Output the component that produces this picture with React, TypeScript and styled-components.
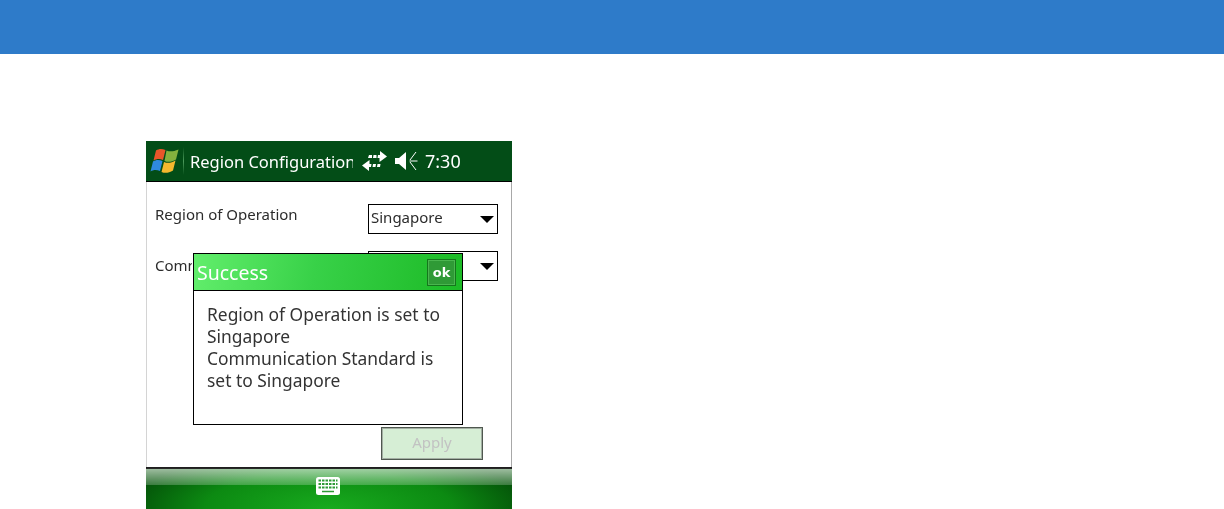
import styled, { createGlobalStyle } from "styled-components";

const GlobalStyle = createGlobalStyle`
  html, body {
    margin: 0;
    padding: 0;
    background: #ffffff;
    font-family: "Noto Sans", "Liberation Sans", sans-serif;
  }
`;

const Page = styled.div`
  height: 509px;
  overflow: hidden;
  width: 1224px;
`;

const Banner = styled.header`
  background: #2e7bc9;
  height: 54px;
`;

const Device = styled.div`
  display: flex;
  filter: blur(0.3px);
  flex-direction: column;
  height: 368px;
  margin-left: 146px;
  margin-top: 87px;
  position: relative;
  width: 366px;
`;

const TitleBar = styled.div`
  align-items: center;
  background: #034d17;
  border-bottom: 1px solid #000000;
  box-sizing: border-box;
  color: #ffffff;
  display: flex;
  flex: 0 0 41px;
  font-size: 16.5px;
  padding-left: 4px;
`;

const Divider = styled.span`
  background: linear-gradient(#034d17, #4c9a5c 50%, #034d17);
  height: 28px;
  margin: 0 6px 0 3px;
  width: 1px;
`;

const TitleText = styled.span`
  overflow: hidden;
  white-space: nowrap;
  width: 163px;
`;

const StatusIcons = styled.div`
  align-items: center;
  display: flex;
  gap: 7px;
  margin-left: 9px;
`;

const Clock = styled.span`
  font-size: 18px;
  margin-left: -1px;
`;

const Body = styled.main`
  background: #ffffff;
  border-left: 1px solid #d4d4d4;
  border-right: 1px solid #a8a8a8;
  box-sizing: border-box;
  display: flex;
  flex: 1;
  flex-direction: column;
  padding: 22px 13px 0 8px;
`;

const FormRow = styled.div`
  align-items: center;
  color: #2c2c2c;
  display: flex;
  font-size: 15px;
  height: 30px;
  justify-content: space-between;
  margin-bottom: 17px;
`;

const RowLabel = styled.span`
  margin-bottom: 10px;
`;

const ClippedLabel = styled(RowLabel)`
  margin-bottom: 3px;
  overflow: hidden;
  white-space: nowrap;
  width: 37px;
`;

const Select = styled.div`
  align-items: center;
  border: 1px solid #000000;
  box-sizing: border-box;
  color: #2c2c2c;
  display: flex;
  font-size: 15px;
  height: 30px;
  justify-content: space-between;
  padding: 0 3px 4px 2px;
  width: 130px;
`;

const Caret = styled.span`
  border-left: 7px solid transparent;
  border-right: 7px solid transparent;
  border-top: 7px solid #000000;
  height: 0;
  margin-left: auto;
  margin-top: 4px;
  width: 0;
`;

const Actions = styled.div`
  display: flex;
  justify-content: flex-end;
  margin-bottom: 7px;
  margin-right: 15px;
  margin-top: auto;
`;

const ApplyButton = styled.button`
  background: #d6eed5;
  border: 1px solid #4f584f;
  box-shadow: 0 0 0 1px #a3aea3 inset;
  box-sizing: border-box;
  color: #c2c2c2;
  font-family: inherit;
  font-size: 15px;
  height: 33px;
  padding: 0 0 3px;
  width: 102px;
`;

const TaskBar = styled.footer`
  background:
    linear-gradient(#1a1a1a 0, #2c2c2c 2px, rgba(255, 255, 255, 0) 2px),
    linear-gradient(rgba(255, 255, 255, 0.66), rgba(255, 255, 255, 0.22) 18px, rgba(255, 255, 255, 0) 18px),
    radial-gradient(ellipse 200px 62px at 50% 100%, #18ab1e, #0c8a12 62%, #045409);
  box-sizing: border-box;
  display: flex;
  flex: 0 0 42px;
  justify-content: center;
  padding: 10px 3px 0 0;
`;

const Dialog = styled.section`
  background: #ffffff;
  border: 1px solid #000000;
  box-sizing: border-box;
  display: flex;
  flex-direction: column;
  height: 172px;
  left: 47px;
  position: absolute;
  top: 112px;
  width: 270px;
`;

const DialogHeader = styled.div`
  align-items: center;
  background: linear-gradient(100deg, #62ee6c, #38d148 45%, #1cba26);
  border-bottom: 1px solid #000000;
  box-sizing: border-box;
  display: flex;
  flex: 0 0 37px;
  justify-content: space-between;
  padding: 0 6px 0 3px;
`;

const DialogTitle = styled.span`
  color: #ffffff;
  font-size: 19.5px;
`;

const OkButton = styled.button`
  background: #2f9a36;
  border: 1px solid #14761c;
  box-shadow: 0 0 0 1px #4bb550 inset;
  box-sizing: border-box;
  color: #ffffff;
  font-family: "DejaVu Sans", sans-serif;
  font-size: 13px;
  font-weight: 700;
  height: 27px;
  padding: 0;
  width: 29px;
`;

const DialogBody = styled.p`
  color: #333333;
  font-size: 17.4px;
  line-height: 22px;
  margin: 0;
  padding: 12px 13px;
  white-space: pre-line;
`;

const WindowsFlag = () => (
  <svg width="30" height="30" viewBox="0 0 30 30">
    <path d="M6 4.500c3-2 6-2 9.500-.5L13 14c-3-1.500-6-1.500-9.500.5z" fill="#e8562a" />
    <path d="M16.500 4.500c3.500 1.500 7 1 12-1L26 13.500c-4 2.500-8 3-11.500 1.500z" fill="#84b23e" />
    <path d="M3 15.500c3-2 6-2 9.500-.5L10 25c-3.500-1.500-6.500-1.500-9.500.5z" fill="#2f8ae0" />
    <path d="M14 16c3.500 1.500 7.500 1 11.500-1.500L23 24.500c-4 2.500-8 3-11.500 1.500z" fill="#f5b82e" />
  </svg>
);

const SyncIcon = () => (
  <svg width="25" height="22" viewBox="0 0 25 22" fill="#ffffff">
    <path d="M7 5h3v3H6zM11.500 5h3v3h-3.500zM16 5h2V1l7 5.500L17.500 12V8H15.500z" />
    <path d="M7.500 10v4h2l-.5 3H7v4L0 15.500zM11 14h3l-.5 3h-3zM15.500 14h3l-.5 3h-3z" />
  </svg>
);

const VolumeIcon = () => (
  <svg width="25" height="22" viewBox="0 0 25 22" fill="none">
    <path d="M1 8h4l7-6v18l-7-6H1z" fill="#ffffff" />
    <path d="M15.500 11h8M16 10l6-8M16 12l6 8" stroke="#ffffff" strokeWidth="1" />
  </svg>
);

const KeyboardIcon = () => (
  <svg width="24" height="18" viewBox="0 0 24 18">
    <rect width="24" height="18" rx="2.500" fill="#ffffff" />
    <path
      d="M2.500 3.500h19M2.500 7h19M2.500 10.500h19"
      stroke="#2f9a36"
      strokeWidth="2"
      strokeDasharray="2.500 1"
    />
    <path d="M6 14.500h12" stroke="#2f9a36" strokeWidth="1.500" />
  </svg>
);

const App = () => (
  <Page>
    <GlobalStyle />
    <Banner />
    <Device>
      <TitleBar>
        <WindowsFlag />
        <Divider />
        <TitleText>Region Configuration</TitleText>
        <StatusIcons>
          <SyncIcon />
          <VolumeIcon />
          <Clock>7:30</Clock>
        </StatusIcons>
      </TitleBar>
      <Body>
        <FormRow>
          <RowLabel>Region of Operation</RowLabel>
          <Select>
            Singapore
            <Caret />
          </Select>
        </FormRow>
        <FormRow>
          <ClippedLabel>Communication Standard</ClippedLabel>
          <Select>
            <Caret />
          </Select>
        </FormRow>
        <Actions>
          <ApplyButton disabled>Apply</ApplyButton>
        </Actions>
      </Body>
      <TaskBar>
        <KeyboardIcon />
      </TaskBar>
      <Dialog>
        <DialogHeader>
          <DialogTitle>Success</DialogTitle>
          <OkButton>ok</OkButton>
        </DialogHeader>
        <DialogBody>
          {"Region of Operation is set to\nSingapore\nCommunication Standard is\nset to Singapore"}
        </DialogBody>
      </Dialog>
    </Device>
  </Page>
);

export default App;
